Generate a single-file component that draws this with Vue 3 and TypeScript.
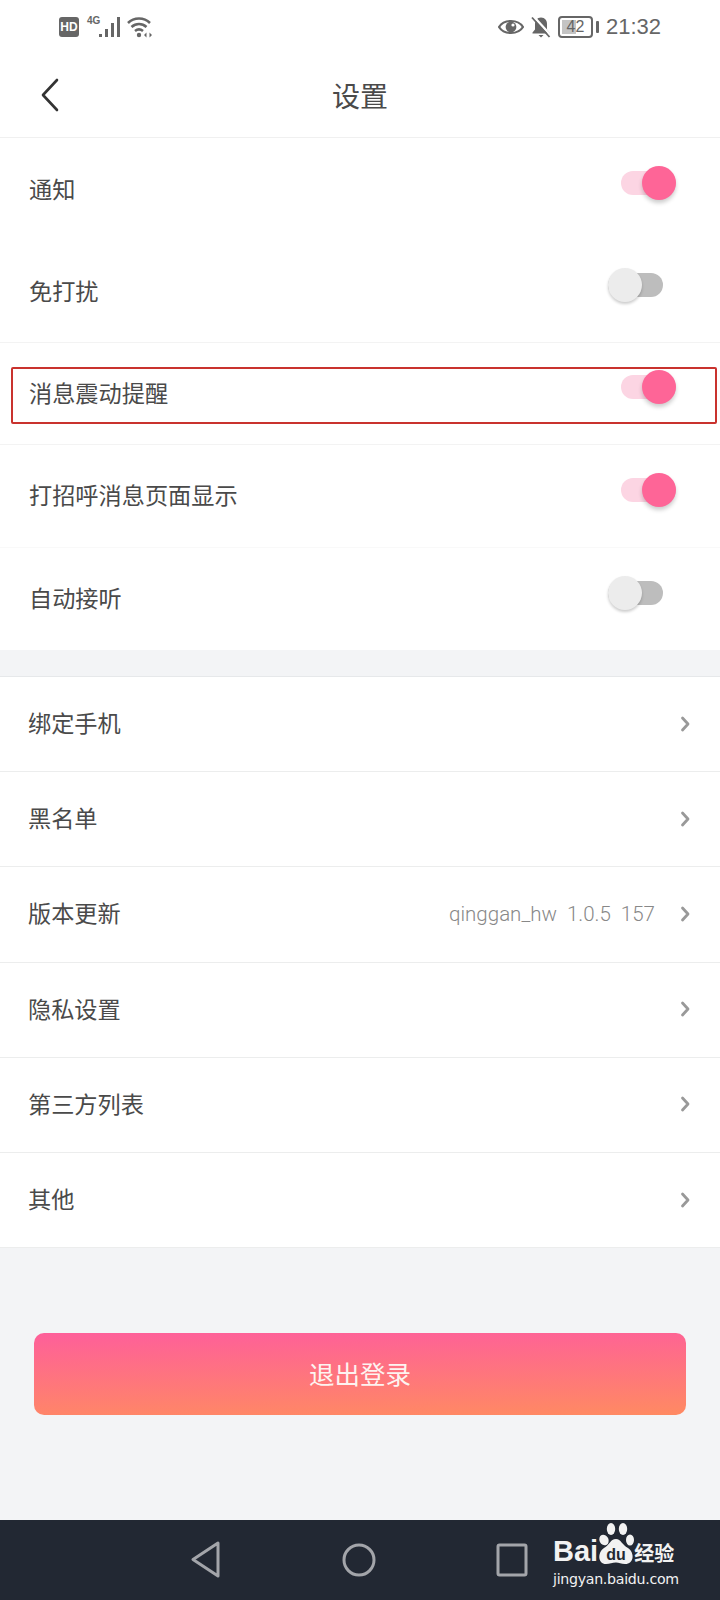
<script setup lang="ts">
const toggles = [
  { label: '通知', on: true },
  { label: '免打扰', on: false },
  { label: '消息震动提醒', on: true, marked: true },
  { label: '打招呼消息页面显示', on: true },
  { label: '自动接听', on: false },
]

const links = [
  { label: '绑定手机' },
  { label: '黑名单' },
  { label: '版本更新', value: 'qinggan_hw  1.0.5  157' },
  { label: '隐私设置' },
  { label: '第三方列表' },
  { label: '其他' },
]
</script>

<template>
  <div class="page">
    <div class="status">
      <div class="status-left">
        <span class="hd">HD</span>
        <span class="net">4G</span>
        <svg class="signal" width="22" height="22" viewBox="0 0 22 22">
          <rect x="0" y="17" width="3" height="3" fill="#666" />
          <rect x="6" y="12" width="3" height="8" fill="#666" />
          <rect x="12" y="6" width="3" height="14" fill="#666" />
          <rect x="18" y="0" width="3" height="20" fill="#666" />
        </svg>
        <svg class="wifi" width="26" height="22" viewBox="0 0 26 22" fill="none" stroke="#666" stroke-width="2.6">
          <path d="M1 7 C7 1 17 1 23 7" />
          <path d="M4.5 11 C9 7 15 7 19.5 11" />
          <path d="M8 15 C10.5 13 13.5 13 16 15" />
          <circle cx="12" cy="19" r="2.2" fill="#666" stroke="none" />
          <path d="M19.5 16.5 L17 19 L19.5 21.5 Z M22.5 16.5 L25 19 L22.5 21.5 Z" fill="#666" stroke="none" />
        </svg>
      </div>
      <div class="status-right">
        <svg width="26" height="18" viewBox="0 0 26 18">
          <path d="M1 9 C6 1 20 1 25 9 C20 17 6 17 1 9 Z" fill="none" stroke="#666" stroke-width="2.2" />
          <circle cx="13" cy="9" r="5.4" fill="#666" />
          <circle cx="15" cy="7" r="1.6" fill="#fff" />
        </svg>
        <svg width="20" height="22" viewBox="0 0 20 22">
          <path d="M10 1.5 C6 1.5 4 4.5 4 8 V13.5 L1.5 16.5 V17.5 H18.5 V16.5 L16 13.5 V8 C16 4.5 14 1.5 10 1.5 Z" fill="#666" />
          <path d="M7.5 19 H12.5 L10 21.5 Z" fill="#666" />
          <path d="M2.5 0.5 L20 19.5" stroke="#fff" stroke-width="2.5" />
          <path d="M1 1.5 L18.5 21" stroke="#666" stroke-width="1.8" />
        </svg>
        <div class="battery-wrap">
          <div class="battery">
            <span class="battery-fill"></span>
            <span class="battery-num">42</span>
          </div>
          <span class="battery-tip"></span>
        </div>
        <span class="clock">21:32</span>
      </div>
    </div>

    <header class="bar">
      <svg class="back" width="18" height="34" viewBox="0 0 18 34" fill="none" stroke="#333" stroke-width="2.6" stroke-linecap="round" stroke-linejoin="round">
        <path d="M16 2 L2 17 L16 32" />
      </svg>
      <span class="title">设置</span>
    </header>

    <section class="toggles">
      <div
        v-for="(item, i) in toggles"
        :key="item.label"
        class="toggle-row"
        :class="{ lined: i === 1 || i === 2, faint: i === 3 }"
      >
        <span class="toggle-label">{{ item.label }}</span>
        <span class="switch" :class="{ on: item.on }">
          <span class="track"></span>
          <span class="thumb"></span>
        </span>
        <span v-if="item.marked" class="mark"></span>
      </div>
    </section>

    <section class="links">
      <div v-for="item in links" :key="item.label" class="link-row">
        <span class="link-label">{{ item.label }}</span>
        <span v-if="item.value" class="link-value">{{ item.value }}</span>
        <svg class="chevron" width="10" height="16" viewBox="0 0 10 16" fill="none" stroke="#999" stroke-width="2.8" stroke-linecap="round" stroke-linejoin="round">
          <path d="M2.5 2 L8 8 L2.5 14" />
        </svg>
      </div>
    </section>

    <div class="logout-area">
      <button class="logout" type="button">退出登录</button>
    </div>

    <nav class="nav">
      <svg width="32" height="38" viewBox="0 0 32 38" fill="none" stroke="#a3a5aa" stroke-width="3" stroke-linejoin="round">
        <path d="M28 2 V35 L3 18.5 Z" />
      </svg>
      <svg width="34" height="38" viewBox="0 0 34 38" fill="none" stroke="#a3a5aa" stroke-width="3">
        <circle cx="17" cy="19" r="15" />
      </svg>
      <svg width="32" height="34" viewBox="0 0 32 34" fill="none" stroke="#a3a5aa" stroke-width="3" stroke-linejoin="round">
        <rect x="2" y="2" width="28" height="30" rx="1.5" />
      </svg>

      <div class="baidu">
        <div class="baidu-top">
          <span class="bai">Bai</span>
          <svg class="paw" width="40" height="46" viewBox="0 0 38 46">
            <ellipse cx="7" cy="17" rx="4.5" ry="5.5" fill="#f2f2f2" transform="rotate(-25 7 17)" />
            <ellipse cx="14" cy="6" rx="4.2" ry="6" fill="#f2f2f2" />
            <ellipse cx="26" cy="6" rx="4.2" ry="6" fill="#f2f2f2" />
            <ellipse cx="33" cy="17" rx="4" ry="5.5" fill="#f2f2f2" />
            <path d="M19 16 C24 16 25 22 31 25 C38 30 37 41 28 41 C24 41 22 39.5 19 39.5 C15 39.5 13 41 9 41 C1 41 0 30 7 25 C13 22 13 16 19 16 Z" fill="#f2f2f2" />
            <text x="19" y="37" class="paw-du">du</text>
          </svg>
          <span class="jy">经验</span>
        </div>
        <div class="baidu-url">jingyan.baidu.com</div>
      </div>
    </nav>
  </div>
</template>

<style>
html,
body {
  margin: 0;
  background: #fff;
}
</style>

<style scoped>
.page {
  width: 720px;
  height: 1600px;
  display: flex;
  flex-direction: column;
  position: relative;
  overflow: hidden;
  background: #f3f4f6;
  font-family: "Noto Sans CJK SC", "Noto Sans", sans-serif;
  color: #4a4a4a;
}

.status {
  height: 52px;
  box-sizing: border-box;
  padding: 2px 59px 0 59px;
  display: flex;
  justify-content: space-between;
  align-items: center;
  background: #fff;
}

.status-left,
.status-right {
  display: flex;
  align-items: center;
}

.hd {
  width: 20px;
  height: 20px;
  border-radius: 3px;
  background: #666;
  color: #fff;
  font: 700 12px/20px "Liberation Sans", sans-serif;
  text-align: center;
}

.net {
  font: 700 10px/1 "Liberation Sans", sans-serif;
  color: #666;
  margin: -12px -1px 0 8px;
}

.signal {
  margin: 2px 0 0 0;
}

.wifi {
  margin-left: 6px;
}

.status-right {
  gap: 7px;
}

.battery-wrap {
  display: flex;
  align-items: center;
  gap: 3px;
}

.battery {
  width: 31px;
  height: 18px;
  border: 2px solid #666;
  border-radius: 4px;
  position: relative;
  display: flex;
  align-items: center;
  justify-content: center;
}

.battery-fill {
  position: absolute;
  left: 2px;
  top: 2px;
  bottom: 2px;
  width: 14px;
  background: #c4c4c4;
}

.battery-num {
  position: relative;
  font: 400 16px/1 "Liberation Sans", sans-serif;
  color: #666;
}

.battery-tip {
  width: 3px;
  height: 12px;
  background: #666;
  border-radius: 1px;
}

.clock {
  font: 400 22px/1 "Liberation Sans", sans-serif;
  color: #666;
}

.bar {
  height: 85px;
  background: #fff;
  border-bottom: 1px solid #f0f0f0;
  display: flex;
  align-items: center;
  justify-content: center;
  position: relative;
}

.back {
  position: absolute;
  left: 41px;
  top: 26px;
}

.title {
  font-size: 28px;
  line-height: 40px;
}

.toggles {
  background: #fff;
  height: 512px;
}

.toggle-row {
  height: 102.4px;
  box-sizing: border-box;
  padding: 0 44px 0 29px;
  display: flex;
  align-items: center;
  justify-content: space-between;
  position: relative;
}

.toggle-row.lined {
  border-bottom: 1px solid #f3f3f3;
}

.toggle-row.faint {
  border-bottom: 1px solid #f9f9f9;
}

.toggle-label {
  font-size: 23.2px;
  line-height: 32px;
  margin-top: -3px;
}

.switch {
  width: 68px;
  height: 34px;
  position: relative;
  margin-top: -12px;
}

.track {
  position: absolute;
  left: 0;
  right: 13px;
  top: 5px;
  height: 24px;
  border-radius: 12px;
  background: #bdbdbd;
}

.thumb {
  position: absolute;
  left: 0;
  top: 0;
  width: 34px;
  height: 34px;
  border-radius: 50%;
  background: #ececec;
  box-shadow: 0 2px 3px rgba(0, 0, 0, 0.2);
}

.switch.on .track {
  left: 13px;
  right: 0;
  background: #fcd5e3;
}

.switch.on .thumb {
  left: 34px;
  background: #fe6597;
  box-shadow: 0 3px 4px rgba(0, 0, 0, 0.2);
}

.mark {
  position: absolute;
  left: 11px;
  right: 3px;
  top: 24px;
  height: 57px;
  box-sizing: border-box;
  border: 2px solid #c9322e;
  border-radius: 2px;
}

.links {
  margin-top: 26px;
  background: #fff;
  border-top: 1px solid #e6e8ea;
}

.link-row {
  height: 95.2px;
  box-sizing: border-box;
  padding: 0 30px 0 28px;
  display: flex;
  align-items: center;
  border-bottom: 1px solid #eceded;
}

.link-label {
  flex: 1;
  font-size: 23.2px;
  line-height: 32px;
  margin-top: -4px;
}

.link-value {
  font: 300 20.5px/28px Roboto, "Liberation Sans", sans-serif;
  color: #888;
  white-space: pre;
  margin-right: 25px;
  margin-top: -1px;
}

.chevron {
  flex: none;
  margin-top: -1px;
}

.logout-area {
  flex: 1;
  padding: 85px 34px 0;
}

.logout {
  display: block;
  width: 652px;
  height: 82px;
  border: none;
  border-radius: 10px;
  background: linear-gradient(179deg, #fe5f9a, #ff8a62);
  color: #fdf3f0;
  font-family: inherit;
  font-size: 25.5px;
  padding: 0 0 4px;
}

.nav {
  height: 80px;
  background: #222833;
  position: relative;
  display: flex;
  align-items: center;
  justify-content: space-between;
  padding: 0 192px 0 190px;
  flex: none;
}

.baidu {
  position: absolute;
  left: 553px;
  top: 3px;
  width: 130px;
  color: #f2f2f2;
}

.baidu-top {
  display: flex;
  align-items: flex-end;
  height: 46px;
}

.bai {
  font: 700 29px/30px "Liberation Sans", sans-serif;
  margin-bottom: 3px;
}

.paw {
  margin-left: -2px;
  flex: none;
}

.paw-du {
  font: 700 16px "Liberation Sans", sans-serif;
  fill: #222833;
  text-anchor: middle;
}

.jy {
  font-size: 20px;
  line-height: 24px;
  font-weight: 700;
  margin-left: -2px;
  margin-bottom: 4px;
  white-space: nowrap;
}

.baidu-url {
  font: 400 14.2px/18px "DejaVu Sans", sans-serif;
  white-space: nowrap;
  letter-spacing: -0.3px;
  margin-top: 1px;
}
</style>
